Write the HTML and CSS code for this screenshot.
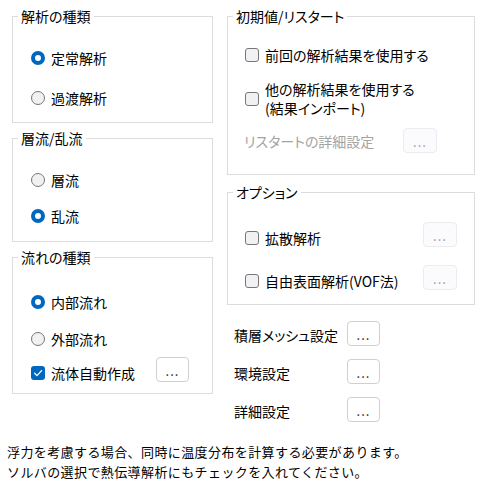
FILE: index.html
```html
<!DOCTYPE html>
<html lang="ja">
<head>
<meta charset="utf-8">
<link rel="stylesheet" href="styles.css">
</head>
<body>
<div class="main">
  <div class="col col-left">
    <div class="group g1">
      <span class="title">解析の種類</span>
      <div class="row r-first1"><span class="radio on"></span><span>定常解析</span></div>
      <div class="row r-gap20"><span class="radio"></span><span>過渡解析</span></div>
    </div>
    <div class="group g2">
      <span class="title">層流/乱流</span>
      <div class="row r-first1"><span class="radio"></span><span>層流</span></div>
      <div class="row r-gap16"><span class="radio on"></span><span>乱流</span></div>
    </div>
    <div class="group g3">
      <span class="title">流れの種類</span>
      <div class="row r-first3"><span class="radio on"></span><span>内部流れ</span></div>
      <div class="row r-gap17"><span class="radio"></span><span>外部流れ</span></div>
      <div class="row r-gap8">
        <span class="check on"><svg viewBox="0 0 14 14" width="14" height="14"><path d="M3.6 7.3 L6 9.6 L10.6 4.6" fill="none" stroke="#fff" stroke-width="1.3" stroke-linecap="round" stroke-linejoin="round"/></svg></span>
        <span class="auto-label">流体自動作成</span>
        <span class="btn up">...</span>
      </div>
    </div>
  </div>
  <div class="col col-right">
    <div class="group ga">
      <span class="title">初期値/リスタート</span>
      <div class="row r-first19"><span class="check"></span><span>前回の解析結果を使用する</span></div>
      <div class="row r-gap15 two"><span class="check"></span><span class="twoline">他の解析結果を使用する<br>(結果インポート)</span></div>
      <div class="row r-gap10">
        <span class="disabled restart-label">リスタートの詳細設定</span>
        <span class="btn dis">...</span>
      </div>
    </div>
    <div class="group gb">
      <span class="title">オプション</span>
      <div class="row r-first20"><span class="check"></span><span class="opt-label">拡散解析</span><span class="btn dis up">...</span></div>
      <div class="row r-gap12"><span class="check"></span><span class="opt-label">自由表面解析(VOF法)</span><span class="btn dis up">...</span></div>
    </div>
    <div class="settings">
      <div class="srow"><span class="slabel">積層メッシュ設定</span><span class="btn up-s">...</span></div>
      <div class="srow"><span class="slabel">環境設定</span><span class="btn up-s">...</span></div>
      <div class="srow"><span class="slabel">詳細設定</span><span class="btn up-s">...</span></div>
    </div>
  </div>
</div>
<p class="note">浮力を考慮する場合、同時に温度分布を計算する必要があります。<br>ソルバの選択で熱伝導解析にもチェックを入れてください。</p>
</body>
</html>
```

FILE: styles.css
```css
html, body {
  margin: 0;
  padding: 0;
  background: #ffffff;
}
body {
  font-family: "Noto Sans CJK JP", "Noto Sans", sans-serif;
  font-size: 14px;
  line-height: 20px;
  color: #000;
  width: 491px;
  height: 491px;
  overflow: hidden;
}
.main {
  display: flex;
  align-items: flex-start;
  gap: 14px;
  padding: 16px 0 0 12px;
  font-feature-settings: "palt";
}
.col {
  display: flex;
  flex-direction: column;
}
.col-left { width: 201px; gap: 15px; }
.col-right { width: 248px; }
.group {
  box-sizing: border-box;
  border: 1px solid #dcdcdc;
  display: flex;
  flex-direction: column;
  align-items: flex-start;
}
.col-left .group { padding-left: 18px; }
.col-right .group { padding-left: 17px; padding-right: 17px; }
.g1 { height: 107px; }
.g2 { height: 104px; }
.g3 { height: 137px; }
.ga { height: 159px; }
.gb { height: 113px; margin-top: 17px; align-items: stretch; }
.title {
  display: block;
  margin: -11px 0 0 -13px;
  padding: 0 3px;
  background: #fff;
  line-height: 20px;
  height: 20px;
}
.col-right .title { margin-left: -12px; }
.gb .title { align-self: flex-start; }
.row {
  display: flex;
  align-items: center;
  gap: 6px;
  min-height: 20px;
}
.r-first1 { margin-top: 22px; }
.r-first3 { margin-top: 25px; }
.r-first19 { margin-top: 19px; }
.r-first20 { margin-top: 20px; }
.r-gap20 { margin-top: 20px; }
.r-gap16 { margin-top: 16px; }
.r-gap17 { margin-top: 17px; }
.r-gap15 { margin-top: 15px; }
.r-gap12 { margin-top: 12px; }
.r-gap10 { margin-top: 10px; }
.r-gap8 { margin-top: 8px; }
.twoline { line-height: 19px; }
.radio {
  box-sizing: border-box;
  width: 14px;
  height: 14px;
  border-radius: 50%;
  border: 1px solid #777;
  background: #f1f1f3;
  flex: none;
}
.radio.on {
  border: 4px solid #0067c0;
  background: #fff;
}
.check {
  box-sizing: border-box;
  width: 14px;
  height: 14px;
  border-radius: 3px;
  border: 1px solid #777;
  background: #f1f1f3;
  flex: none;
  display: flex;
}
.check.on {
  border: none;
  background: #0067c0;
}
.btn {
  box-sizing: border-box;
  width: 33px;
  height: 25px;
  border: 1px solid #d0d0d0;
  border-radius: 4px;
  background: #fff;
  display: flex;
  align-items: center;
  justify-content: center;
  font-size: 13px;
  line-height: 13px;
  padding-top: 2px;
  letter-spacing: 1px;
  color: #222;
  flex: none;
}
.btn.dis {
  width: 34px;
  border-color: #ececf0;
  background: #fbfbfd;
  color: #9a9a9a;
}
.up { margin-bottom: 6px; }
.up-s { margin-bottom: 3px; }
.auto-label { width: 99px; }
.disabled { color: #a3a3a3; }
.restart-label { width: 153px; margin-left: -1px; }
.opt-label { flex: 1; }
.settings {
  display: flex;
  flex-direction: column;
  gap: 10px;
  margin-top: 16px;
  padding-left: 7px;
}
.srow {
  display: flex;
  align-items: center;
  height: 28px;
}
.slabel { width: 113px; }
.note {
  margin: 17px 0 0 0;
  padding-left: 7px;
  font-size: 13px;
  line-height: 20px;
  letter-spacing: 0.4px;
}
```
